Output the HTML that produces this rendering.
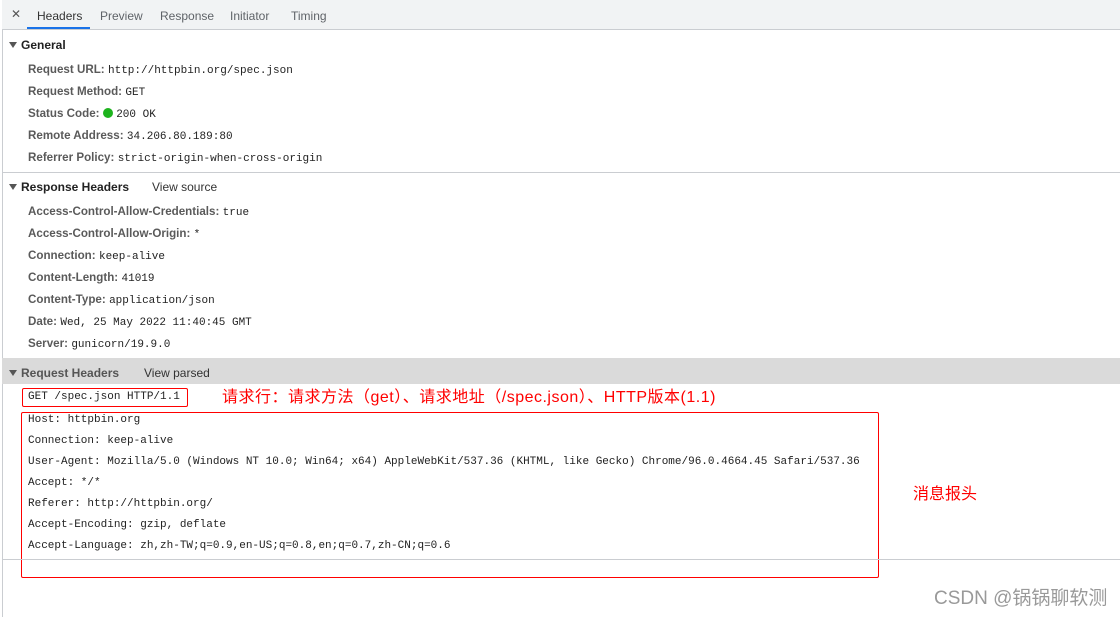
<!DOCTYPE html><html><head><style>
body{margin:0;width:1120px;height:617px;background:#fff;position:relative;overflow:hidden;font-family:"Liberation Sans","Noto Sans CJK SC",sans-serif;font-size:12px;color:#303942}
.a{position:absolute;white-space:nowrap;line-height:14px}
.m{font-family:"Liberation Mono",monospace;font-size:11px;color:#222}
.l{color:#5a5a5a;font-weight:bold;font-size:11.6px}
.h{font-weight:bold;color:#222}
.hr{position:absolute;left:2px;right:0;height:1px;background:#cacdd1}
.tri{display:inline-block;width:0;height:0;border-left:4px solid transparent;border-right:4px solid transparent;border-top:6px solid #555;margin-right:4px;vertical-align:1px}
.r{color:#f00;font-family:"Liberation Sans","Noto Sans CJK SC",sans-serif}
</style></head><body>
<div style="position:absolute;left:2px;top:0;width:1px;height:617px;background:#cacdd1"></div>
<div style="position:absolute;left:2px;right:0;top:0;height:29px;background:#f1f3f4;border-bottom:1px solid #cacdd1"></div>
<div class="a" style="left:11px;top:7px;color:#555">✕</div>
<div class="a" style="left:37px;top:9px;color:#333">Headers</div>
<div style="position:absolute;left:27px;top:27px;width:63px;height:2px;background:#1a73e8"></div>
<div class="a" style="left:100px;top:9px;color:#5f6368">Preview</div>
<div class="a" style="left:160px;top:9px;color:#5f6368">Response</div>
<div class="a" style="left:230px;top:9px;color:#5f6368">Initiator</div>
<div class="a" style="left:291px;top:9px;color:#5f6368">Timing</div>

<div class="a h" style="left:9px;top:38px"><span class="tri"></span>General</div>
<div class="a" style="left:28px;top:62px"><span class="l">Request URL:</span> <span class="m">http://httpbin.org/spec.json</span></div>
<div class="a" style="left:28px;top:84px"><span class="l">Request Method:</span> <span class="m">GET</span></div>
<div class="a" style="left:28px;top:106px"><span class="l">Status Code:</span> <span style="display:inline-block;width:10px;height:10px;border-radius:50%;background:#1db31d;vertical-align:-1px"></span> <span class="m">200 OK</span></div>
<div class="a" style="left:28px;top:128px"><span class="l">Remote Address:</span> <span class="m">34.206.80.189:80</span></div>
<div class="a" style="left:28px;top:150px"><span class="l">Referrer Policy:</span> <span class="m">strict-origin-when-cross-origin</span></div>
<div class="hr" style="top:172px"></div>

<div class="a h" style="left:9px;top:180px"><span class="tri"></span>Response Headers</div>
<div class="a" style="left:152px;top:180px;color:#333">View source</div>
<div class="a" style="left:28px;top:204px"><span class="l">Access-Control-Allow-Credentials:</span> <span class="m">true</span></div>
<div class="a" style="left:28px;top:226px"><span class="l">Access-Control-Allow-Origin:</span> <span class="m">*</span></div>
<div class="a" style="left:28px;top:248px"><span class="l">Connection:</span> <span class="m">keep-alive</span></div>
<div class="a" style="left:28px;top:270px"><span class="l">Content-Length:</span> <span class="m">41019</span></div>
<div class="a" style="left:28px;top:292px"><span class="l">Content-Type:</span> <span class="m">application/json</span></div>
<div class="a" style="left:28px;top:314px"><span class="l">Date:</span> <span class="m">Wed, 25 May 2022 11:40:45 GMT</span></div>
<div class="a" style="left:28px;top:336px"><span class="l">Server:</span> <span class="m">gunicorn/19.9.0</span></div>

<div style="position:absolute;left:2px;right:0;top:358px;height:26px;background:#dadada"></div>
<div class="a" style="left:9px;top:366px;color:#555;font-weight:bold"><span class="tri"></span>Request Headers</div>
<div class="a" style="left:144px;top:366px;color:#333">View parsed</div>

<div style="position:absolute;left:22px;top:388px;width:164px;height:17px;border:1px solid #f00;border-radius:2px"></div>
<div class="a m" style="left:28px;top:390px">GET /spec.json HTTP/1.1</div>
<div class="a r" style="left:222px;top:388px;font-size:16px;line-height:19px;letter-spacing:0.5px">请求行：请求方法（get）、请求地址（/spec.json）、HTTP版本(1.1)</div>

<div style="position:absolute;left:21px;top:412px;width:856px;height:164px;border:1px solid #f00;border-radius:2px"></div>
<div class="a m" style="left:28px;top:413px">Host: httpbin.org</div>
<div class="a m" style="left:28px;top:434px">Connection: keep-alive</div>
<div class="a m" style="left:28px;top:455px">User-Agent: Mozilla/5.0 (Windows NT 10.0; Win64; x64) AppleWebKit/537.36 (KHTML, like Gecko) Chrome/96.0.4664.45 Safari/537.36</div>
<div class="a m" style="left:28px;top:476px">Accept: */*</div>
<div class="a m" style="left:28px;top:497px">Referer: http://httpbin.org/</div>
<div class="a m" style="left:28px;top:518px">Accept-Encoding: gzip, deflate</div>
<div class="a m" style="left:28px;top:539px">Accept-Language: zh,zh-TW;q=0.9,en-US;q=0.8,en;q=0.7,zh-CN;q=0.6</div>
<div class="a r" style="left:913px;top:486px;font-size:16px;line-height:18px">消息报头</div>
<div class="hr" style="top:559px"></div>
<div class="a" style="left:934px;top:588px;font-size:19px;line-height:22px;color:#999">CSDN @锅锅聊软测</div>
</body></html>
